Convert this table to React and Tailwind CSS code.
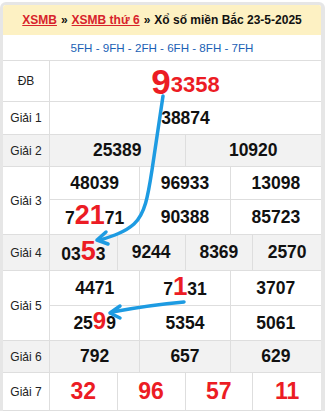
import React from "react";

const font = { fontFamily: '"Liberation Sans", Arial, sans-serif' };

const Num = ({ children }) => (
  <span className="text-[17.5px] font-bold text-[#111]">{children}</span>
);
const Red = ({ children, size = "text-[27px]" }) => (
  <span className={`${size} text-[#ec1c24] leading-none`}>{children}</span>
);

const Label = ({ children }) => (
  <div className="w-[47px] shrink-0 border-r border-[#dedede] flex items-center justify-center text-[12px] text-[#222]">
    {children}
  </div>
);

const Cells = ({ cols, h, children, last }) => (
  <div
    className={`${cols} ${h} grid divide-x divide-[#dedede] ${last ? "" : "border-b border-[#dedede]"}`}
  >
    {children.map((c, i) => (
      <div key={i} className="flex items-center justify-center">
        {c}
      </div>
    ))}
  </div>
);

export default function App() {
  return (
    <div className="w-[325px] h-[413px] bg-white pt-[2px] overflow-hidden relative" style={font}>
      <div className="border-l-[3px] border-r-[4px] border-t-[3px] border-[#e6e6e6] rounded-t-[6px] overflow-hidden">
        {/* header */}
        <div className="h-[30px] bg-[#fdf1c3] flex items-center justify-center text-[12px] font-bold text-[#111] whitespace-nowrap">
          <a className="text-[#d7232b] underline">XSMB</a>
          <span className="mx-[4px]">»</span>
          <a className="text-[#d7232b] underline">XSMB thứ 6</a>
          <span className="mx-[4px]">»</span>
          <span>Xổ số miền Bắc 23-5-2025</span>
        </div>
        <div className="h-[26px] flex items-center justify-center text-[11.6px] text-[#1b5fb5] border-b border-[#dedede]">
          5FH - 9FH - 2FH - 6FH - 8FH - 7FH
        </div>

        {/* ĐB */}
        <div className="flex h-[41px] border-b border-[#dedede]">
          <Label>ĐB</Label>
          <div className="flex-1 flex items-center justify-center text-[#ec1c24] leading-none">
            <span className="text-[35px] font-bold">9</span>
            <span className="text-[22px] font-semibold mt-[8px]">3358</span>
          </div>
        </div>

        {/* Giải 1 */}
        <div className="flex h-[33px] border-b border-[#dedede]">
          <Label>Giải 1</Label>
          <div className="flex-1 flex items-center justify-center">
            <Num>38874</Num>
          </div>
        </div>

        {/* Giải 2 */}
        <div className="flex h-[32px] border-b border-[#dedede] bg-[#f2f2f2]">
          <Label>Giải 2</Label>
          <div className="flex-1">
            <Cells cols="grid-cols-2" h="h-full" last>
              {[<Num>25389</Num>, <Num>10920</Num>]}
            </Cells>
          </div>
        </div>

        {/* Giải 3 */}
        <div className="flex border-b border-[#dedede]">
          <Label>Giải 3</Label>
          <div className="flex-1">
            <Cells cols="grid-cols-3" h="h-[33px]">
              {[<Num>48039</Num>, <Num>96933</Num>, <Num>13098</Num>]}
            </Cells>
            <Cells cols="grid-cols-3" h="h-[34px]" last>
              {[
                <Num>
                  7<Red>21</Red>71
                </Num>,
                <Num>90388</Num>,
                <Num>85723</Num>,
              ]}
            </Cells>
          </div>
        </div>

        {/* Giải 4 */}
        <div className="flex h-[36px] border-b border-[#dedede] bg-[#f2f2f2]">
          <Label>Giải 4</Label>
          <div className="flex-1">
            <Cells cols="grid-cols-4" h="h-full" last>
              {[
                <Num>
                  03<Red>5</Red>3
                </Num>,
                <Num>9244</Num>,
                <Num>8369</Num>,
                <Num>2570</Num>,
              ]}
            </Cells>
          </div>
        </div>

        {/* Giải 5 */}
        <div className="flex border-b border-[#dedede]">
          <Label>Giải 5</Label>
          <div className="flex-1">
            <Cells cols="grid-cols-3" h="h-[35px]">
              {[
                <Num>4471</Num>,
                <Num>
                  7<Red size="text-[26px] font-bold">1</Red>31
                </Num>,
                <Num>3707</Num>,
              ]}
            </Cells>
            <Cells cols="grid-cols-3" h="h-[34px]" last>
              {[
                <Num>
                  25<Red size="text-[24px] font-bold">9</Red>9
                </Num>,
                <Num>5354</Num>,
                <Num>5061</Num>,
              ]}
            </Cells>
          </div>
        </div>

        {/* Giải 6 */}
        <div className="flex h-[32px] border-b border-[#dedede] bg-[#f2f2f2]">
          <Label>Giải 6</Label>
          <div className="flex-1">
            <Cells cols="grid-cols-3" h="h-full" last>
              {[<Num>792</Num>, <Num>657</Num>, <Num>629</Num>]}
            </Cells>
          </div>
        </div>

        {/* Giải 7 */}
        <div className="flex h-[38px] border-b border-[#dedede]">
          <Label>Giải 7</Label>
          <div className="flex-1">
            <Cells cols="grid-cols-4" h="h-full" last>
              {["32", "96", "57", "11"].map((n) => (
                <span className="text-[23px] font-bold text-[#ec1c24]">{n}</span>
              ))}
            </Cells>
          </div>
        </div>
      </div>

      {/* arrows drawn over the table */}
      <svg className="absolute left-0 top-0 pointer-events-none" width="325" height="413">
        <g stroke="#1d9be2" strokeWidth="3.5" fill="none" strokeLinecap="round" strokeLinejoin="round">
          <path d="M163 96 L152 170 C148 196 145 214 134 224 C125 232 113 236 100 240" />
          <path d="M97 240 L106 232 M97 240 L108 244" />
          <path d="M184 302 Q150 305 112 312" />
          <path d="M110 313 L120 306 M110 313 L120 318" />
        </g>
      </svg>
    </div>
  );
}
